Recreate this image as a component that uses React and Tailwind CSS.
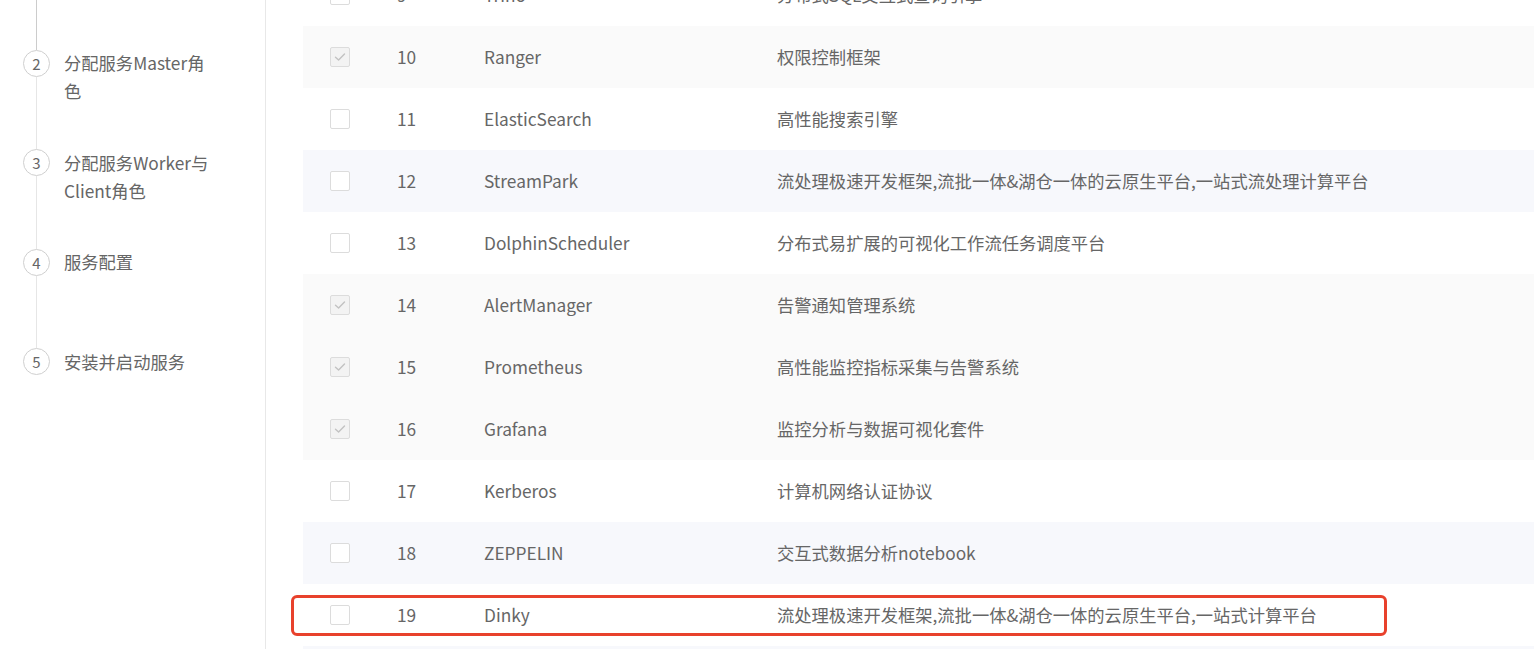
import React from "react";

const steps = [
  { no: 1, title: "选择服务", done: true },
  { no: 2, title: "分配服务Master角色" },
  { no: 3, title: "分配服务Worker与Client角色" },
  { no: 4, title: "服务配置" },
  { no: 5, title: "安装并启动服务", last: true },
];

const services = [
  { id: 9, name: "Trino", desc: "分布式SQL交互式查询引擎" },
  { id: 10, name: "Ranger", desc: "权限控制框架", checked: true },
  { id: 11, name: "ElasticSearch", desc: "高性能搜索引擎" },
  { id: 12, name: "StreamPark", desc: "流处理极速开发框架,流批一体&湖仓一体的云原生平台,一站式流处理计算平台" },
  { id: 13, name: "DolphinScheduler", desc: "分布式易扩展的可视化工作流任务调度平台" },
  { id: 14, name: "AlertManager", desc: "告警通知管理系统", checked: true },
  { id: 15, name: "Prometheus", desc: "高性能监控指标采集与告警系统", checked: true },
  { id: 16, name: "Grafana", desc: "监控分析与数据可视化套件", checked: true },
  { id: 17, name: "Kerberos", desc: "计算机网络认证协议" },
  { id: 18, name: "ZEPPELIN", desc: "交互式数据分析notebook" },
  { id: 19, name: "Dinky", desc: "流处理极速开发框架,流批一体&湖仓一体的云原生平台,一站式计算平台", marked: true },
  { id: 20, name: "Hue", desc: "" },
];

const Checkbox = ({ checked }) =>
  checked ? (
    <span className="flex h-[20px] w-[20px] items-center justify-center rounded-[2px] border border-[#dcdcdc] bg-[#f3f3f3]">
      <svg width="12" height="10" viewBox="0 0 12 10" fill="none">
        <path d="M1.5 5.2 L4.6 8 L10.5 2" stroke="#c2c2c2" strokeWidth="1.4" strokeLinecap="round" strokeLinejoin="round" />
      </svg>
    </span>
  ) : (
    <span className="block h-[20px] w-[20px] rounded-[2px] border border-[#dcdcdc] bg-white" />
  );

export default function App() {
  return (
    <div
      className="flex h-[649px] w-[1534px] overflow-hidden bg-white text-[17.3px] text-[#666]"
      style={{ fontFamily: '"Noto Sans CJK SC", "Noto Sans", sans-serif' }}
    >
      {/* Steps */}
      <aside className="w-[266px] shrink-0 border-r border-[#e8e8e8]">
        <div className="-mt-[50px] pl-[23px]">
          {steps.map((s) => (
            <div key={s.no} className="flex h-[99.5px] gap-[14px]">
              <div className="flex w-[27px] shrink-0 flex-col items-center">
                <span className="flex h-[27px] w-[27px] shrink-0 items-center justify-center rounded-full border border-[#cfcfcf] text-[15px] leading-none text-[#666]">
                  {s.no}
                </span>
                {!s.last && (
                  <span className={`w-px flex-1 ${s.done ? "bg-[#cccccc]" : "bg-[#e6e6e6]"}`} />
                )}
              </div>
              <p className="-mt-[0.5px] w-[150px] leading-[28px]">{s.title}</p>
            </div>
          ))}
        </div>
      </aside>

      {/* Service table */}
      <main className="min-w-0 flex-1 pl-[37px]">
        <div className="-mt-[36px]">
          {services.map((r) => (
            <div
              key={r.id}
              className={`relative flex h-[62px] items-center ${
                r.checked ? "bg-[#fafafa]" : r.id % 2 === 0 ? "bg-[#f7f8fc]" : "bg-white"
              }`}
            >
              <div className="w-[94px] shrink-0 pl-[27px]">
                <Checkbox checked={r.checked} />
              </div>
              <div className="w-[87px] shrink-0">{r.id}</div>
              <div className="w-[293px] shrink-0">{r.name}</div>
              <div className="shrink-0 whitespace-nowrap">{r.desc}</div>
              {r.marked && (
                <span className="pointer-events-none absolute left-[-12px] top-[11px] h-[41px] w-[1096px] rounded-[6px] border-[3px] border-[#e8412c]" />
              )}
            </div>
          ))}
        </div>
      </main>
    </div>
  );
}
